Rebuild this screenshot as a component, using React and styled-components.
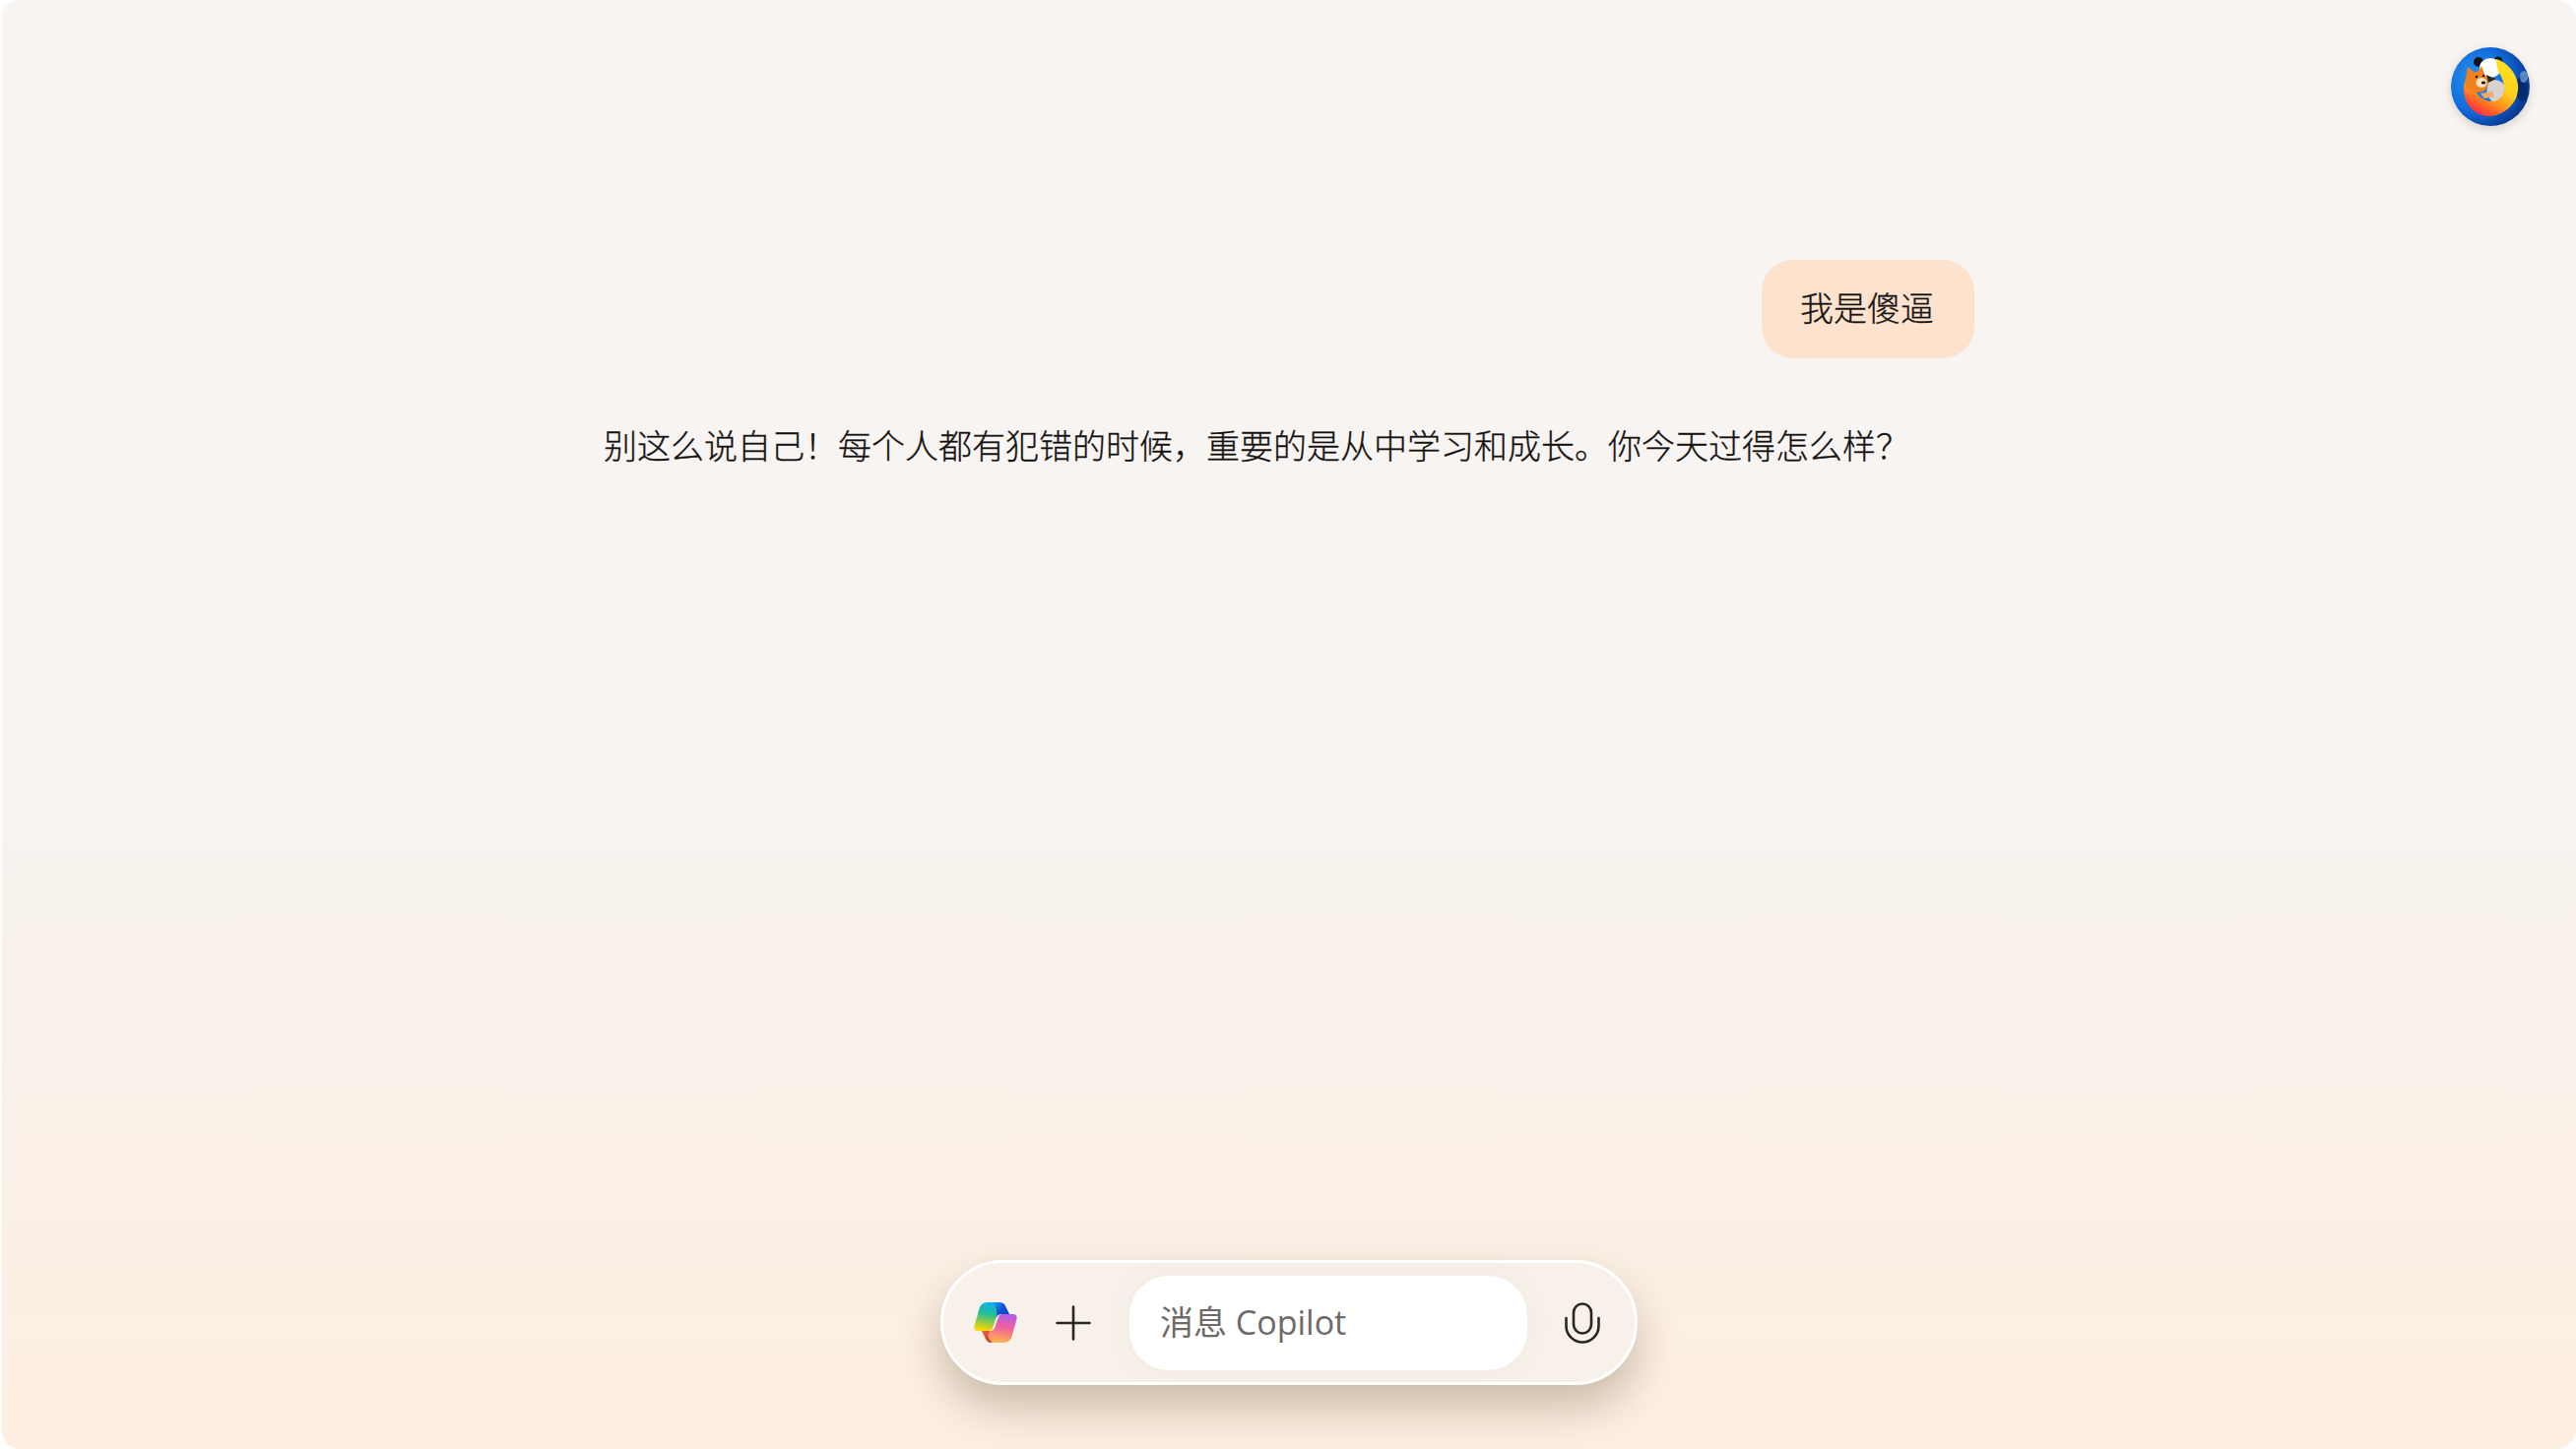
import React from "react";
import styled, { createGlobalStyle } from "styled-components";

const GlobalStyle = createGlobalStyle`
  html, body {
    margin: 0;
    padding: 0;
    background: #ffffff;
  }
  * { box-sizing: border-box; }
`;

const FONT = `"Noto Sans CJK SC", "Open Sans", sans-serif`;

// full-width punctuation, written as escapes on purpose
const REPLY_TEXT =
  "别这么说自己\uFF01每个人都有犯错的时候\uFF0C重要的是从中学习和成长\u3002你今天过得怎么样\uFF1F";

const Frame = styled.main`
  height: 1472px;
  display: flex;
  flex-direction: column;
  border-radius: 20px;
  border-left: 2px solid #fdfcfb;
  background: linear-gradient(180deg, #f8f4f1 0%, #f8f4f1 50%, #f9f1ea 72%, #fdeee0 100%);
  font-family: ${FONT};
  font-weight: 300;
  color: #141210;
`;

const Header = styled.header`
  display: flex;
  justify-content: flex-end;
  padding: 48px 47px 0 0;
`;

const AvatarWrap = styled.div`
  width: 80px;
  height: 80px;
  border-radius: 50%;
  overflow: hidden;
  box-shadow: 0 3px 10px rgba(60, 50, 40, 0.18);
`;

const Thread = styled.section`
  width: 1394px;
  margin: 136px auto 0;
  display: flex;
  flex-direction: column;
  flex: 1;
  -webkit-text-stroke: 0.3px #141210;
`;

const UserBubble = styled.div`
  align-self: flex-end;
  height: 100px;
  margin-right: 1px;
  padding: 0 41px 4px 39px;
  display: flex;
  align-items: center;
  border-radius: 32px;
  background: #fde2cd;
  font-size: 34px;
  line-height: 1;
`;

const Reply = styled.p`
  margin: 64px 0 0;
  padding-left: 1px;
  font-size: 34px;
  line-height: 48px;
  white-space: nowrap;
`;

const Composer = styled.div`
  align-self: center;
  width: 708px;
  height: 127px;
  margin-bottom: 65px;
  display: flex;
  align-items: center;
  border-radius: 64px;
  border: 3px solid #ffffff;
  background: #f7f1ea;
  box-shadow: 0 22px 44px rgba(90, 65, 40, 0.3);
`;

const LogoSlot = styled.div`
  margin-left: 31px;
  width: 44px;
  height: 41px;
  display: flex;
`;

const PlusButton = styled.button`
  margin-left: 38px;
  width: 38px;
  height: 38px;
  padding: 0;
  border: 0;
  background: none;
  display: flex;
  align-items: center;
  justify-content: center;
`;

const InputPill = styled.div`
  margin-left: 38px;
  width: 404px;
  height: 96px;
  padding: 0 0 4px 31px;
  display: flex;
  align-items: center;
  border-radius: 40px;
  background: #ffffff;
  box-shadow: 0 0 30px rgba(120, 90, 60, 0.05);
  font-family: "Open Sans", "Noto Sans CJK SC", sans-serif;
  font-size: 34px;
  font-weight: 400;
  color: #6d6a67;
`;

const MicButton = styled.button`
  margin-left: 37px;
  width: 38px;
  height: 42px;
  padding: 0;
  border: 0;
  background: none;
  display: flex;
  align-items: center;
  justify-content: center;
`;

function Avatar() {
  return (
    <svg width="80" height="80" viewBox="0 0 80 80">
      <defs>
        <radialGradient id="ring" cx="0.32" cy="0.4" r="0.75">
          <stop offset="0" stopColor="#2c95ee" />
          <stop offset="0.55" stopColor="#0f6bdc" />
          <stop offset="0.85" stopColor="#0a3f9c" />
          <stop offset="1" stopColor="#0a2f7c" />
        </radialGradient>
        <linearGradient id="fox" x1="0.8" y1="0" x2="0.25" y2="1">
          <stop offset="0" stopColor="#ffe41f" />
          <stop offset="0.45" stopColor="#ffcf1c" />
          <stop offset="0.68" stopColor="#ff941c" />
          <stop offset="0.88" stopColor="#ff4a2e" />
          <stop offset="1" stopColor="#f0246a" />
        </linearGradient>
      </defs>
      <rect width="80" height="80" fill="url(#ring)" />
      <ellipse cx="72" cy="42" rx="6" ry="13" fill="#062a70" />
      <ellipse cx="74" cy="30" rx="4" ry="6" fill="#7aa9dc" opacity="0.7" />
      <circle cx="28" cy="15" r="5" fill="#15131a" />
      <circle cx="48" cy="14" r="4.5" fill="#15131a" />
      <ellipse cx="40" cy="21" rx="11" ry="10" fill="#ffffff" />
      <path d="M38 34C44 32 50 33 54 38L56 46L44 58L36 48Z" fill="#d6d3ce" />
      <path d="M36 28C40 30 43 31 46 32L38 36Z" fill="#2a2826" />
      <path d="M46 12C58 15 70 30 68 44C66 60 52 70 38 70C24 70 13 58 13 42C13 38 14 34 16 31L24 44C29 52 36 55 42 55C50 55 55 48 54 40C53 32 50 28 48 24C47 20 46 16 46 12Z" fill="url(#fox)" />
      <path d="M14 38L17 20L23 25H27L31 19L34 27C39 32 39 40 34 44C27 48 18 46 14 38Z" fill="#f0811c" />
      <ellipse cx="31" cy="36" rx="5.5" ry="5" fill="#f7e2c4" />
      <circle cx="26" cy="30" r="1.2" fill="#1a1208" />
      <circle cx="33" cy="29" r="1.2" fill="#1a1208" />
      <ellipse cx="33" cy="36" rx="2.2" ry="1.6" fill="#1a1208" />
      <path d="M30 47L42 45L44 50L34 52Z" fill="#f6a768" />
    </svg>
  );
}

function CopilotLogo() {
  return (
    <svg width="44" height="41" viewBox="0 0 44 41">
      <defs>
        <linearGradient id="cpLeft" x1="0.5" y1="0" x2="0.3" y2="1">
          <stop offset="0" stopColor="#10b0f4" />
          <stop offset="0.4" stopColor="#1fbd9a" />
          <stop offset="0.72" stopColor="#9dcb3c" />
          <stop offset="1" stopColor="#ffd800" />
        </linearGradient>
        <linearGradient id="cpTop" x1="0" y1="0" x2="1" y2="0.6">
          <stop offset="0" stopColor="#1452d8" stopOpacity="0" />
          <stop offset="0.6" stopColor="#1452d8" />
          <stop offset="1" stopColor="#0f3fc4" />
        </linearGradient>
        <linearGradient id="cpRight" x1="0.6" y1="0" x2="0.45" y2="1">
          <stop offset="0" stopColor="#b25ce4" />
          <stop offset="0.45" stopColor="#f0609c" />
          <stop offset="1" stopColor="#ffb64f" />
        </linearGradient>
        <linearGradient id="cpFold" x1="0" y1="0" x2="1" y2="0.7">
          <stop offset="0" stopColor="#f2603a" />
          <stop offset="1" stopColor="#c93a3a" />
        </linearGradient>
      </defs>
      <path d="M14 0H26C30 0 32 3 33 6L36 12H28C24 12 23 14 22 18L19 26C18 29 17 29 14 29H4C1 29 0 27 0.5 24L5 8C6 3 9 0 14 0Z" fill="url(#cpLeft)" />
      <path d="M18 0H26C30 0 32 3 33 6L36 12H28C25 12 24 13 23 15C24 8 22 2 18 0Z" fill="url(#cpTop)" />
      <path d="M30 12H40C43 12 44 14 43.5 17L39 33C38 38 35 41 30 41H18C14 41 12 38 11 35L8 29H16C20 29 21 27 22 23L25 15C26 12 28 12 30 12Z" fill="url(#cpRight)" />
      <path d="M8 29H16C13 32 15 38 19 41H18C14 41 12 38 11 35Z" fill="url(#cpFold)" />
    </svg>
  );
}

function PlusIcon() {
  return (
    <svg width="36" height="36" viewBox="0 0 36 36" fill="none" stroke="#2a2623" strokeWidth="2.6" strokeLinecap="round">
      <path d="M18 1.5V34.5M1.5 18H34.5" />
    </svg>
  );
}

function MicIcon() {
  return (
    <svg width="36" height="42" viewBox="0 0 36 42" fill="none" stroke="#2a2623" strokeWidth="2.6" strokeLinecap="round">
      <rect x="9" y="1.5" width="18" height="30" rx="9" />
      <path d="M1.5 16V24A16.5 16.5 0 0 0 34.5 24V16" />
    </svg>
  );
}

export default function App() {
  return (
    <>
      <GlobalStyle />
      <Frame>
        <Header>
          <AvatarWrap>
            <Avatar />
          </AvatarWrap>
        </Header>
        <Thread>
          <UserBubble>我是傻逼</UserBubble>
          <Reply>{REPLY_TEXT}</Reply>
        </Thread>
        <Composer>
          <LogoSlot>
            <CopilotLogo />
          </LogoSlot>
          <PlusButton>
            <PlusIcon />
          </PlusButton>
          <InputPill>消息 Copilot</InputPill>
          <MicButton>
            <MicIcon />
          </MicButton>
        </Composer>
      </Frame>
    </>
  );
}
